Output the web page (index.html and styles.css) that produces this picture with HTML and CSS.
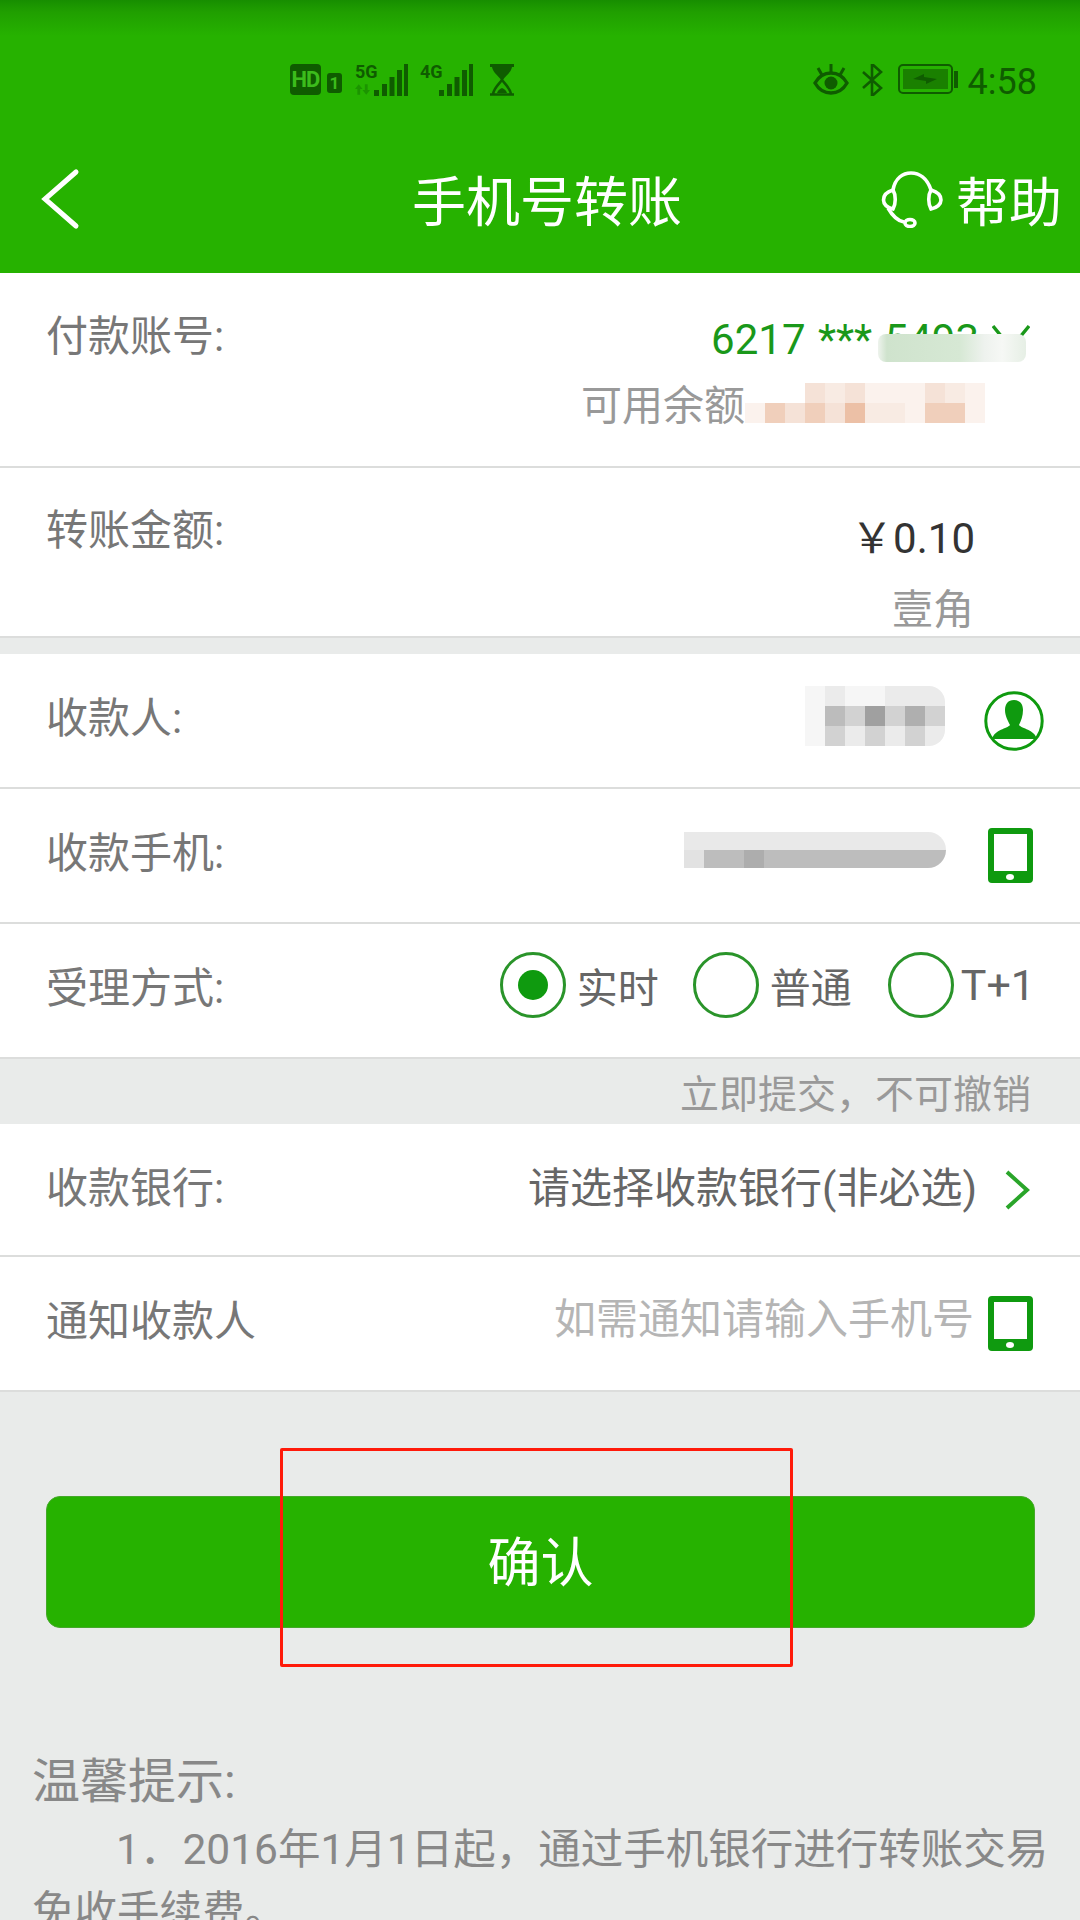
FILE: index.html
```html
<!DOCTYPE html>
<html lang="zh-CN">

<head>
    <meta charset="UTF-8" />
    <title>手机号转账</title>
    <link rel="stylesheet" href="styles.css">
</head>

<body>
    <div class="page">
        <header class="top">
            <div class="statusbar">
                <div class="status-left">
                    <span class="hd">HD</span>
                    <span class="sim">1</span>
                    <span class="net">
                        <span class="net-col">
                            <span class="net-label">5G</span>
                            <svg class="net-arrows" viewBox="0 0 16 11"><path d="M4 0l4 5H5.5v6h-3V5H0zM12 11L8 6h2.500V0h3v6H16z" /></svg>
                        </span>
                        <svg class="bars" viewBox="0 0 34 32"><path d="M0 32v-6h5v6zM8 32V20h5v12zM15.500 32V13h5v19zM23 32V6h5v26zM30 32V0h4v32z" /></svg>
                    </span>
                    <span class="net">
                        <span class="net-col">
                            <span class="net-label">4G</span>
                        </span>
                        <svg class="bars" viewBox="0 0 34 32"><path d="M0 32v-6h5v6zM8 32V20h5v12zM15.500 32V13h5v19zM23 32V6h5v26zM30 32V0h4v32z" /></svg>
                    </span>
                    <svg class="hourglass" viewBox="0 0 26 32"><path d="M1 0h24v3h-2c-1 6-7 9-9 13h-2C10 12 4 9 3 3H1z" fill="#0f5c00" /><path d="M1 30.500h24M4 30c1-6 6-10 9-14 3 4 8 8 9 14" fill="none" stroke="#0f5c00" stroke-width="2.600" /><path d="M8 29c1-3 3-4 5-5 2 1 4 2 5 5z" fill="#0f5c00" /></svg>
                </div>
                <div class="status-right">
                    <svg class="eye" viewBox="0 0 36 32"><path d="M2 19c4-7 10-10 16-10s12 3 16 10c-4 7-10 10-16 10S6 26 2 19z" fill="none" stroke="#0f5c00" stroke-width="3.400" /><circle cx="18" cy="19" r="6.500" fill="#0f5c00" /><path d="M18 8V0M9 11 5 4M27 11l4-7" stroke="#0f5c00" stroke-width="3" /></svg>
                    <svg class="bt" viewBox="0 0 22 32"><path d="M2 8l18 16-9 8V0l9 8L2 24" fill="none" stroke="#0f5c00" stroke-width="2.600" /></svg>
                    <span class="battery"><span class="battery-fill"><svg viewBox="0 0 24 12"><path d="M0 6l11-5v3l13 2-11 5V8z" fill="#0f5c00" /></svg></span></span>
                    <span class="battery-nub"></span>
                    <span class="clock">4:58</span>
                </div>
            </div>
            <div class="navbar">
                <svg class="back" viewBox="0 0 40 62"><path d="M36 4 5 31l31 27" fill="none" stroke="#fff" stroke-width="5" stroke-linecap="round" /></svg>
                <h1 class="nav-title">手机号转账</h1>
                <div class="nav-help">
                    <svg class="headset" viewBox="10 8 62 58"><g fill="none" stroke="#fff" stroke-width="3.600"><path d="M22 28C24 16 32 11 40 11s16 5 20 17" /><path d="M22 28c-7 2-9.500 6-9.500 10s3.500 8 9.500 9c3-5 3-14 0-19z" /><path d="M60 28c-3 5-3 14 0 19 6-1 10-5 10-9s-3-8-10-10z" /><path d="M17 46c4 7 9 13 16 14" /><ellipse cx="39" cy="61" rx="5" ry="3.500" /></g></svg>
                    <span class="help-text">帮助</span>
                </div>
            </div>
        </header>

        <section class="group">
            <div class="row row-account">
                <span class="label">付款账号:</span>
                <div class="account">
                    <div class="account-no">
                        <span>6217 *** 5493</span>
                        <svg class="account-arrow" viewBox="0 0 38 28"><path d="M1 2l18 22L37 2" fill="none" stroke="#1a981a" stroke-width="3.400" /></svg>
                    </div>
                    <div class="balance">可用余额</div>
                </div>
                <div class="smudge smudge-account"></div>
                <div class="smudge smudge-balance">
                    <i></i><i></i><i></i><i class="p2"></i><i class="p1"></i><i class="p2"></i><i class="p0"></i><i class="p0"></i><i class="p0"></i><i class="p2"></i><i class="p1"></i><i class="p0"></i>
                    <i class="p0"></i><i class="p3"></i><i class="p2"></i><i class="p3"></i><i class="p2"></i><i class="p4"></i><i class="p1"></i><i class="p1"></i><i class="p0"></i><i class="p3"></i><i class="p3"></i><i class="p0"></i>
                </div>
            </div>
            <div class="row row-amount">
                <span class="label">转账金额:</span>
                <div class="amount">
                    <div class="amount-num">&#xFFE5;0.10</div>
                    <div class="amount-cn">壹角</div>
                </div>
            </div>
        </section>

        <section class="group group-second">
            <div class="row row-line">
                <span class="label">收款人:</span>
                <div class="row-end">
                    <div class="mosaic mosaic-name">
                        <i class="g0"></i><i class="g1"></i><i class="g0"></i><i class="g0"></i><i class="g1"></i><i class="g1"></i><i class="g1"></i>
                        <i class="g0"></i><i class="g3"></i><i class="g2"></i><i class="g5"></i><i class="g2"></i><i class="g4"></i><i class="g2"></i>
                        <i class="g0"></i><i class="g2"></i><i class="g1"></i><i class="g2"></i><i class="g1"></i><i class="g2"></i><i class="g1"></i>
                    </div>
                    <svg class="person" viewBox="0 0 60 60"><circle cx="30" cy="30" r="28.200" fill="none" stroke="#0f9a0f" stroke-width="3" /><path d="M30 9c6 0 9 4 9 10 0 6-2 11-4 15 3 4 15 4 18 14H8c3-10 15-10 18-14-2-4-5-9-5-15 0-6 3-10 9-10z" fill="#0f9a0f" /></svg>
                </div>
            </div>
            <div class="row row-line">
                <span class="label">收款手机:</span>
                <div class="row-end">
                    <div class="mosaic mosaic-phone"></div>
                    <span class="tablet"><span class="tablet-dot"></span></span>
                </div>
            </div>
            <div class="row row-line row-last">
                <span class="label">受理方式:</span>
                <div class="radios">
                    <div class="radio radio-on"><span class="radio-mark"></span><span>实时</span></div>
                    <div class="radio"><span class="radio-mark"></span><span>普通</span></div>
                    <div class="radio"><span class="radio-mark"></span><span>T+1</span></div>
                </div>
            </div>
        </section>

        <div class="note">立即提交&#xFF0C;不可撤销</div>

        <section class="group group-third">
            <div class="row row-bank">
                <span class="label">收款银行:</span>
                <div class="row-end">
                    <span class="bank-value">请选择收款银行(非必选)</span>
                    <svg class="go" viewBox="0 0 26 40"><path d="M3 2l20 18L3 38" fill="none" stroke="#2aa52a" stroke-width="4" /></svg>
                </div>
            </div>
            <div class="row row-line">
                <span class="label">通知收款人</span>
                <div class="row-end">
                    <span class="placeholder">如需通知请输入手机号</span>
                    <span class="tablet"><span class="tablet-dot"></span></span>
                </div>
            </div>
        </section>

        <div class="actions">
            <button class="confirm">确认</button>
            <div class="red-box"></div>
        </div>

        <div class="tips">
            <div class="tips-title">温馨提示:</div>
            <p class="tips-text">1&#xFF0E;2016年1月1日起&#xFF0C;通过手机银行进行转账交易免收手续费。</p>
        </div>
    </div>
</body>

</html>
```

FILE: styles.css
```css
* {
    box-sizing: border-box;
}

html,
body {
    margin: 0;
    padding: 0;
}

body {
    font-family: Roboto, "Noto Sans CJK SC", sans-serif;
    background: #e9ebea;
}

.page {
    width: 1080px;
    height: 1920px;
    overflow: hidden;
    background: #e9ebea;
}

/* header */
.top {
    height: 273px;
    background: linear-gradient(#178e00 0, #209f00 12px, #26b200 36px);
}

.statusbar {
    height: 125px;
    padding: 64px 43px 0 290px;
    display: flex;
    justify-content: space-between;
    color: #0f5c00;
}

.status-left,
.status-right {
    display: flex;
    align-items: flex-start;
    height: 32px;
}

.hd {
    width: 31px;
    height: 31px;
    background: #0f5c00;
    color: #3cbc1c;
    font-size: 22px;
    font-weight: 700;
    letter-spacing: -1px;
    line-height: 31px;
    text-align: center;
    border-radius: 4px;
}

.sim {
    width: 15px;
    height: 20px;
    margin: 9px 0 0 6px;
    background: #0f5c00;
    color: #3cbc1c;
    font-size: 17px;
    font-weight: 700;
    line-height: 20px;
    text-align: center;
    border-radius: 3px;
}

.net {
    display: flex;
    align-items: flex-end;
    margin-left: 13px;
    width: 53px;
    height: 32px;
}

.net+.net {
    margin-left: 12px;
}

.net-col {
    display: flex;
    flex-direction: column;
    width: 19px;
    height: 32px;
}

.net-label {
    font-family: "Liberation Sans Narrow", Roboto, sans-serif;
    font-size: 18px;
    font-weight: 700;
    line-height: 15px;
}

.net-arrows {
    width: 15px;
    height: 11px;
    margin-top: 5px;
    fill: #1c9400;
}

.bars {
    width: 34px;
    height: 32px;
    fill: #0f5c00;
}

.hourglass {
    width: 26px;
    height: 32px;
    margin-left: 16px;
}

.eye {
    width: 36px;
    height: 32px;
}

.bt {
    width: 22px;
    height: 32px;
    margin-left: 12px;
}

.battery {
    width: 55px;
    height: 30px;
    margin-left: 15px;
    padding: 3px;
    border: 2px solid #0f5c00;
    border-radius: 5px;
}

.battery-fill {
    display: flex;
    align-items: center;
    justify-content: center;
    width: 100%;
    height: 100%;
    background: #1a8000;
}

.battery-fill svg {
    width: 24px;
    height: 12px;
}

.battery-nub {
    width: 4px;
    height: 17px;
    margin: 7px 0 0 1px;
    background: #0f5c00;
}

.clock {
    margin: 2px 0 0 10px;
    font-size: 36px;
    line-height: 32px;
}

.navbar {
    height: 148px;
    padding: 0 18px 0 40px;
    display: flex;
    align-items: center;
    justify-content: space-between;
    color: #fff;
}

.back {
    width: 40px;
    height: 62px;
}

.nav-title {
    margin: 10px 0 0 133px;
    font-size: 54px;
    font-weight: 400;
    line-height: 60px;
}

.nav-help {
    display: flex;
    align-items: center;
    gap: 13px;
    font-size: 53px;
    line-height: 60px;
}

.help-text {
    padding-top: 10px;
}

.headset {
    width: 62px;
    height: 58px;
}

/* rows */
.group {
    background: #fff;
}

.group-second {
    margin-top: 16px;
}

.row {
    display: flex;
    justify-content: space-between;
    padding: 0 36px 0 46px;
    border-bottom: 2px solid #dcdddc;
    position: relative;
}

.label {
    font-size: 42px;
    color: #777;
    line-height: 56px;
}

.row-account {
    height: 195px;
    padding-top: 36px;
}

.account {
    text-align: right;
    padding-right: 14px;
}

.account-no {
    display: flex;
    justify-content: flex-end;
    font-size: 42px;
    line-height: 56px;
    color: #1a981a;
    word-spacing: 2px;
    white-space: nowrap;
    padding-top: 3px;
}

.account-arrow {
    width: 38px;
    height: 28px;
    margin: 12px 0 0 13px;
}

.balance {
    font-size: 41px;
    line-height: 56px;
    color: #999;
    margin-top: 10px;
    padding-right: 285px;
}

/* the scribbled-out bits sit on top of the text */
.smudge {
    position: absolute;
}

.smudge-account {
    left: 878px;
    top: 61px;
    width: 148px;
    height: 28px;
    background: linear-gradient(90deg, #eef3ed 0, #cfe3cd 6%, #d6e8d4 55%, #eef2ee 72%, #f6f8f5 84%, #e6efe5 100%);
    border-radius: 8px;
}

.smudge-balance {
    left: 745px;
    top: 110px;
    width: 240px;
    height: 40px;
    display: grid;
    grid-template-columns: repeat(12, 20px);
    grid-template-rows: 20px 20px;
}

.p0 {
    background: #fbf2ed;
}

.p1 {
    background: #f8ebe3;
}

.p2 {
    background: #f5e2d7;
}

.p3 {
    background: #f0cfbb;
}

.p4 {
    background: #ecc0a6;
}

.row-amount {
    height: 170px;
    padding-top: 35px;
}

.amount {
    text-align: right;
    padding-right: 69px;
}

.amount-num {
    font-size: 42px;
    line-height: 56px;
    color: #333;
    padding-top: 8px;
}

.amount-cn {
    font-size: 41px;
    line-height: 56px;
    color: #999;
    margin-top: 15px;
    padding-right: 1px;
}

.row-line {
    height: 135px;
    align-items: center;
}

.row-line .label {
    padding-bottom: 3px;
}

.row-end {
    display: flex;
    align-items: center;
}

.mosaic-name {
    display: grid;
    grid-template-columns: repeat(7, 20px);
    grid-template-rows: repeat(3, 20px);
    width: 140px;
    border-radius: 0 16px 16px 0;
    overflow: hidden;
    margin: 0 39px 10px 0;
}

.g0 {
    background: #f6f6f6;
}

.g1 {
    background: #ebebeb;
}

.g2 {
    background: #d2d2d2;
}

.g3 {
    background: #bcbcbc;
}

.g4 {
    background: #afafaf;
}

.g5 {
    background: #a0a0a0;
}

.mosaic-phone {
    width: 262px;
    height: 36px;
    margin: 0 42px 12px 0;
    border-radius: 0 18px 18px 0;
    background: linear-gradient(90deg, #e2e2e2 0 20px, transparent 20px 60px, #adadad 60px 80px, transparent 80px),
        linear-gradient(#e9e9e9 0 50%, #bdbdbd 50% 100%);
    background-size: 100% 100%, 100% 100%;
    background-position: 0 18px, 0 0;
    background-repeat: no-repeat;
}

.person {
    width: 60px;
    height: 60px;
}

.tablet {
    display: block;
    position: relative;
    width: 45px;
    height: 55px;
    border: 6px solid #0f9a0f;
    border-bottom-width: 12px;
    border-radius: 4px;
    margin-right: 11px;
}

.tablet-dot {
    position: absolute;
    left: 12px;
    bottom: -9px;
    width: 8px;
    height: 6px;
    border-radius: 50%;
    background: #fff;
}

.radios {
    display: flex;
    align-items: center;
    margin: 0 9px 12px 0;
}

.radio {
    display: flex;
    align-items: center;
    font-size: 41px;
    color: #666;
    margin-left: 34px;
}

.radio:last-child {
    margin-left: 36px;
    font-size: 43px;
}

.radio-mark {
    width: 66px;
    height: 66px;
    margin-right: 11px;
    border: 3px solid #2a942a;
    border-radius: 50%;
    display: flex;
    align-items: center;
    justify-content: center;
}

.radio:last-child .radio-mark {
    margin-right: 7px;
}

.radio-on .radio-mark::after {
    content: "";
    width: 30px;
    height: 30px;
    border-radius: 50%;
    background: #0f9a0f;
}

.note {
    height: 65px;
    padding-right: 49px;
    text-align: right;
    font-size: 39px;
    line-height: 72px;
    color: #999;
}

.row-bank {
    height: 133px;
    align-items: center;
}

.row-bank .label {
    padding-bottom: 2px;
}

.bank-value {
    font-size: 42px;
    color: #666;
    margin-right: 27px;
    padding-bottom: 11px;
}

.go {
    width: 26px;
    height: 40px;
    margin: 0 14px 0 0;
}

.placeholder {
    font-size: 42px;
    color: #b5b5b5;
    margin-right: 14px;
    padding-bottom: 16px;
}

/* button + the red box somebody drew over it */
.actions {
    position: relative;
    padding: 104px 45px 0 46px;
}

.confirm {
    display: block;
    width: 989px;
    height: 132px;
    background: #26b200;
    color: #fff;
    border: 1px solid #45a82a;
    border-radius: 14px;
    font-family: inherit;
    font-size: 53px;
    padding: 0 0 6px;
}

.red-box {
    position: absolute;
    left: 280px;
    top: 56px;
    width: 513px;
    height: 219px;
    border: 3px solid #ff1a0a;
    border-radius: 2px;
}

.tips {
    padding: 0 16px 0 32px;
    margin-top: 124px;
    color: #888;
}

.tips-title {
    font-size: 48px;
    line-height: 60px;
}

.tips-text {
    margin: 7px 0 0;
    font-size: 42.500px;
    line-height: 62px;
    text-indent: 84px;
}
```
